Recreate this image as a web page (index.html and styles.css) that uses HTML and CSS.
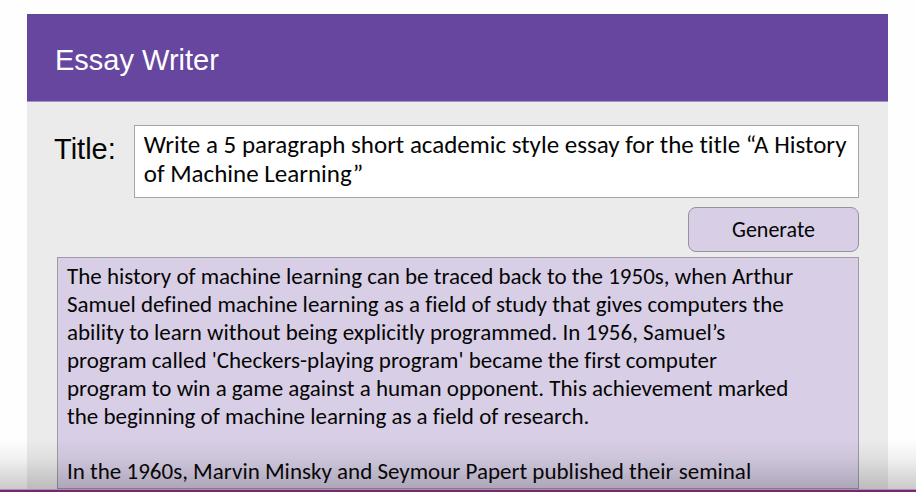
FILE: index.html
```html
<!DOCTYPE html>
<html lang="en">
<head>
<meta charset="utf-8">
<meta name="viewport" content="width=device-width, initial-scale=1">
<title>Essay Writer</title>
<link rel="stylesheet" href="styles.css">
</head>
<body>
<main class="app">
  <header class="app-header">
    <h1 class="app-title">Essay Writer</h1>
  </header>
  <form class="essay-form">
    <div class="title-row">
      <label class="title-label" for="essay-title">Title:</label>
      <textarea class="title-input" id="essay-title" rows="2">Write a 5 paragraph short academic style essay for the title “A History of Machine Learning”</textarea>
    </div>
    <button class="generate" type="button">Generate</button>
    <output class="essay" for="essay-title">
      <p>The history of machine learning can be traced back to the 1950s, when Arthur<br>
      Samuel defined machine learning as a field of study that gives computers the<br>
      ability to learn without being explicitly programmed. In 1956, Samuel’s<br>
      program called 'Checkers-playing program' became the first computer<br>
      program to win a game against a human opponent. This achievement marked<br>
      the beginning of machine learning as a field of research.</p>
      <p>In the 1960s, Marvin Minsky and Seymour Papert published their seminal</p>
    </output>
  </form>
</main>
<div class="bottom-edge"></div>
</body>
</html>
```
FILE: styles.css
```css
* {
  box-sizing: border-box;
}

body {
  margin: 0;
  min-height: 100vh;
  display: flex;
  flex-direction: column;
  background: #fefefe;
  color: #050505;
  font-family: Carlito, Lato, sans-serif;
  font-variant-ligatures: none;
}

.app {
  flex: 1;
  display: flex;
  flex-direction: column;
  margin: 14px 28px 0 27px;
  background: #ebebeb;
}

.app-header {
  padding: 29px 28px 25px;
  background: #66469f;
  border-top: 1px solid #5d4a86;
  border-bottom: 1px solid #a58fcb;
}

.app-title {
  margin: 0;
  color: #fff;
  font: 400 29px/32px "Liberation Sans", sans-serif;
}

.essay-form {
  flex: 1;
  display: flex;
  flex-direction: column;
  padding: 23px 29px 1px 30px;
}

.title-row {
  display: flex;
  align-items: flex-start;
  gap: 18px;
}

.title-label {
  padding-top: 8px;
  margin-left: -3px;
  font: 400 29px/32px "Liberation Sans", sans-serif;
}

.title-input {
  flex: 1;
  min-width: 0;
  height: 73px;
  padding: 4px 9px;
  border: 1px solid #a6a6a6;
  border-radius: 0;
  background: #fff;
  color: inherit;
  font-family: inherit;
  font-size: 25px;
  line-height: 29px;
  font-variant-ligatures: none;
  resize: none;
  overflow: hidden;
}

.generate {
  align-self: flex-end;
  width: 171px;
  height: 45px;
  margin: 9px 0 5px;
  border: 1px solid #96909f;
  border-radius: 8px;
  background: #d8cfe6;
  color: inherit;
  font-family: inherit;
  font-size: 22px;
  line-height: 28px;
}

.essay {
  flex: 1;
  padding: 4px 9px 0;
  border: 1px solid #9f99a8;
  background: #d8cfe6;
  font-size: 23px;
  line-height: 28px;
}

.essay p {
  margin: 0 0 27px;
}

.essay p:last-child {
  margin-bottom: 0;
}

.bottom-edge {
  height: 2px;
  background: #74286f;
}

.bottom-edge::before {
  content: "";
  position: absolute;
  inset: auto 0 2px;
  height: 50px;
  background: linear-gradient(rgba(20, 20, 20, 0), rgba(20, 20, 20, 0.06) 40%, rgba(20, 20, 20, 0.22));
  border-bottom: 1px solid #b58ab5;
  pointer-events: none;
}
```
